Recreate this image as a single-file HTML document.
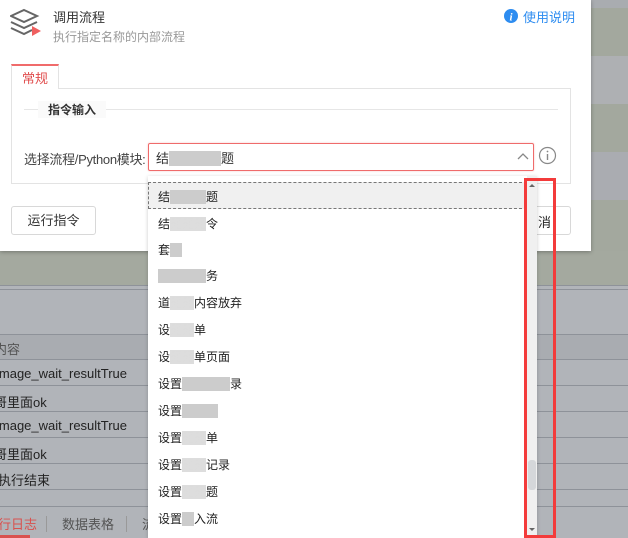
<!DOCTYPE html>
<html><head><meta charset="utf-8"><style>
*{margin:0;padding:0;box-sizing:border-box}
body{width:628px;height:538px;overflow:hidden;position:relative;font-family:"Liberation Sans","Noto Sans CJK SC",sans-serif;font-size:13px;color:#333;background:#b1b4b9}
.abs{position:absolute;white-space:nowrap}
.dlg{left:0;top:0;width:591px;height:251px;background:#fff;box-shadow:0 1px 4px rgba(0,0,0,.3)}
.rows div{position:absolute;left:0;width:628px;height:1px;background:#8e9299}
.txt{position:absolute;left:0;font-size:13px;color:#222;white-space:nowrap}
.item{position:absolute;left:10px;font-size:12px;color:#222;white-space:nowrap}
</style></head><body>
<div class="abs" style="left:591px;top:0;width:37px;height:8px;background:#a9acb0"></div>
<div class="abs" style="left:591px;top:8px;width:37px;height:48px;background:#a3a89e"></div>
<div class="abs" style="left:591px;top:56px;width:37px;height:48px;background:#aeb0b3"></div>
<div class="abs" style="left:591px;top:104px;width:37px;height:48px;background:#a3a89e"></div>
<div class="abs" style="left:591px;top:152px;width:37px;height:48px;background:#aaacb1"></div>
<div class="abs" style="left:591px;top:200px;width:37px;height:51px;background:#a3a89e"></div>
<div class="abs" style="left:0;top:251px;width:628px;height:34px;background:#a4a99f"></div>
<div class="rows">
<div style="top:285px"></div><div style="top:289px"></div><div style="top:334px"></div><div style="top:359px"></div><div style="top:385px"></div><div style="top:411px"></div><div style="top:437px"></div><div style="top:463px"></div><div style="top:489px"></div><div style="top:506px"></div>
</div>
<div class="abs" style="left:0;top:335px;width:628px;height:24px;background:#a9acb1"></div>
<div class="txt" style="top:339px;left:-6px;color:#555">内容</div>
<div class="txt" style="top:366px;left:-4px">image_wait_resultTrue</div>
<div class="txt" style="top:392px;left:-6px">哥里面ok</div>
<div class="txt" style="top:418px;left:-4px">image_wait_resultTrue</div>
<div class="txt" style="top:444px;left:-6px">哥里面ok</div>
<div class="txt" style="top:470px;left:-2px">执行结束</div>
<div class="txt" style="top:514px;left:-15px;color:#d9514e">运行日志</div>
<div class="abs" style="left:0;top:535px;width:30px;height:3px;background:#d9514e"></div>
<div class="abs" style="left:46px;top:516px;width:1px;height:16px;background:#999"></div>
<div class="txt" style="left:62px;top:514px;color:#555">数据表格</div>
<div class="abs" style="left:126px;top:516px;width:1px;height:16px;background:#999"></div>
<div class="txt" style="left:142px;top:514px;color:#555">流</div>

<div class="abs dlg">
 <svg class="abs" style="left:10px;top:8px" width="34" height="30" viewBox="0 0 34 30"><path d="M14 2 L27 8 L14 14 L1 8 Z" fill="none" stroke="#666" stroke-width="2"/><path d="M1 14 L14 20 L27 14 M1 20 L14 26 L22 22" fill="none" stroke="#666" stroke-width="2"/><path d="M22 18 L31 23 L22 28 Z" fill="#f06060"/></svg>
 <div class="abs" style="left:53px;top:7px;font-size:13px;color:#333">调用流程</div>
 <div class="abs" style="left:53px;top:28px;font-size:12px;color:#999">执行指定名称的内部流程</div>
 <svg class="abs" style="left:504px;top:9px" width="14" height="14"><circle cx="7" cy="7" r="7" fill="#2d8cf0"/><text x="7" y="11.5" font-size="11" font-weight="bold" font-style="italic" fill="#fff" text-anchor="middle" font-family="Liberation Serif">i</text></svg>
 <div class="abs" style="left:523px;top:7px;font-size:13px;color:#2d8cf0">使用说明</div>
 <div class="abs" style="left:11px;top:88px;width:560px;height:96px;border:1px solid #e3e3e3"></div>
 <div class="abs" style="left:11px;top:64px;width:48px;height:25px;border:1px solid #e3e3e3;border-top:2px solid #f06b6b;border-bottom:none;background:#fff;color:#e04c4c;font-size:13px;padding:2px 0 0 10px">常规</div>
 <div class="abs" style="left:24px;top:109px;width:534px;height:1px;background:#e6e6e6"></div>
 <div class="abs" style="left:38px;top:101px;padding:0 10px;background:#fafafa;font-size:12px;font-weight:bold;color:#333">指令输入</div>
 <div class="abs" style="left:24px;top:149px;font-size:13px;color:#444;letter-spacing:-0.3px">选择流程/Python模块:</div>
 <div class="abs" style="left:148px;top:143px;width:386px;height:28px;border:1px solid #ef6b6b;border-radius:2px;box-shadow:0 0 2px #f8caca"></div>
 <div class="abs" style="left:156px;top:148px;font-size:13px">结<span style="background:#ccc;color:#ccc">题题题题</span>题</div>
 <svg class="abs" style="left:517px;top:152px" width="12" height="8"><path d="M1 7 L6 2 L11 7" fill="none" stroke="#888" stroke-width="1.3"/></svg>
 <svg class="abs" style="left:538px;top:146px" width="19" height="19"><circle cx="9.5" cy="9.5" r="8" fill="none" stroke="#888" stroke-width="1.2"/><rect x="8.8" y="8" width="1.4" height="6" fill="#888"/><circle cx="9.5" cy="5.5" r="0.9" fill="#888"/></svg>
 <div class="abs" style="left:11px;top:206px;width:85px;height:29px;border:1px solid #d8d8d8;border-radius:3px;font-size:13px;text-align:center;line-height:27px">运行指令</div>
 <div class="abs" style="left:490px;top:206px;width:81px;height:29px;border:1px solid #d8d8d8;border-radius:3px"></div>
</div>

<div class="abs" style="left:148px;top:176px;width:389px;height:362px;background:#fff;box-shadow:0 1px 4px rgba(0,0,0,.2);overflow:hidden">
 <div class="abs" style="left:0;top:6px;width:379px;height:27px;background:#f0f0f0;border:1px dashed #777"></div>
 <div class="item" style="top:12px">结<span style="color:#ccc;background:#ccc">题题题</span>题</div>
 <div class="item" style="top:39px">结<span style="color:#ddd;background:#ddd">题题题</span>令</div>
 <div class="item" style="top:65px">套<span style="color:#ccc;background:#ccc">题</span></div>
 <div class="item" style="top:91px"><span style="color:#ccc;background:#ccc">题题题题</span>务</div>
 <div class="item" style="top:118px">道<span style="color:#ddd;background:#ddd">题题</span>内容放弃</div>
 <div class="item" style="top:145px">设<span style="color:#ddd;background:#ddd">题题</span>单</div>
 <div class="item" style="top:172px">设<span style="color:#ddd;background:#ddd">题题</span>单页面</div>
 <div class="item" style="top:199px">设置<span style="color:#ccc;background:#ccc">题题题题</span>录</div>
 <div class="item" style="top:226px">设置<span style="color:#ccc;background:#ccc">题题题</span></div>
 <div class="item" style="top:253px">设置<span style="color:#ddd;background:#ddd">题题</span>单</div>
 <div class="item" style="top:280px">设置<span style="color:#ddd;background:#ddd">题题</span>记录</div>
 <div class="item" style="top:307px">设置<span style="color:#ddd;background:#ddd">题题</span>题</div>
 <div class="item" style="top:334px">设置<span style="color:#ccc;background:#ccc">题</span>入流</div>
 <div class="abs" style="left:379px;top:0;width:10px;height:362px;background:#f0f0f0"></div>
 <div class="abs" style="left:380px;top:284px;width:8px;height:30px;background:#d5d7da;border-radius:3px"></div>
 <div class="abs" style="left:381px;top:5px;width:0;height:0;border:3px solid transparent;border-bottom-color:#666"></div>
 <div class="abs" style="left:381px;top:352px;width:0;height:0;border:3px solid transparent;border-top-color:#666"></div>
</div>
<div class="abs" style="left:524px;top:178px;width:32px;height:360px;border:3px solid #f33b3b"></div>
<div class="abs" style="left:538px;top:212px;font-size:13px;color:#222">消</div>
</body></html>
